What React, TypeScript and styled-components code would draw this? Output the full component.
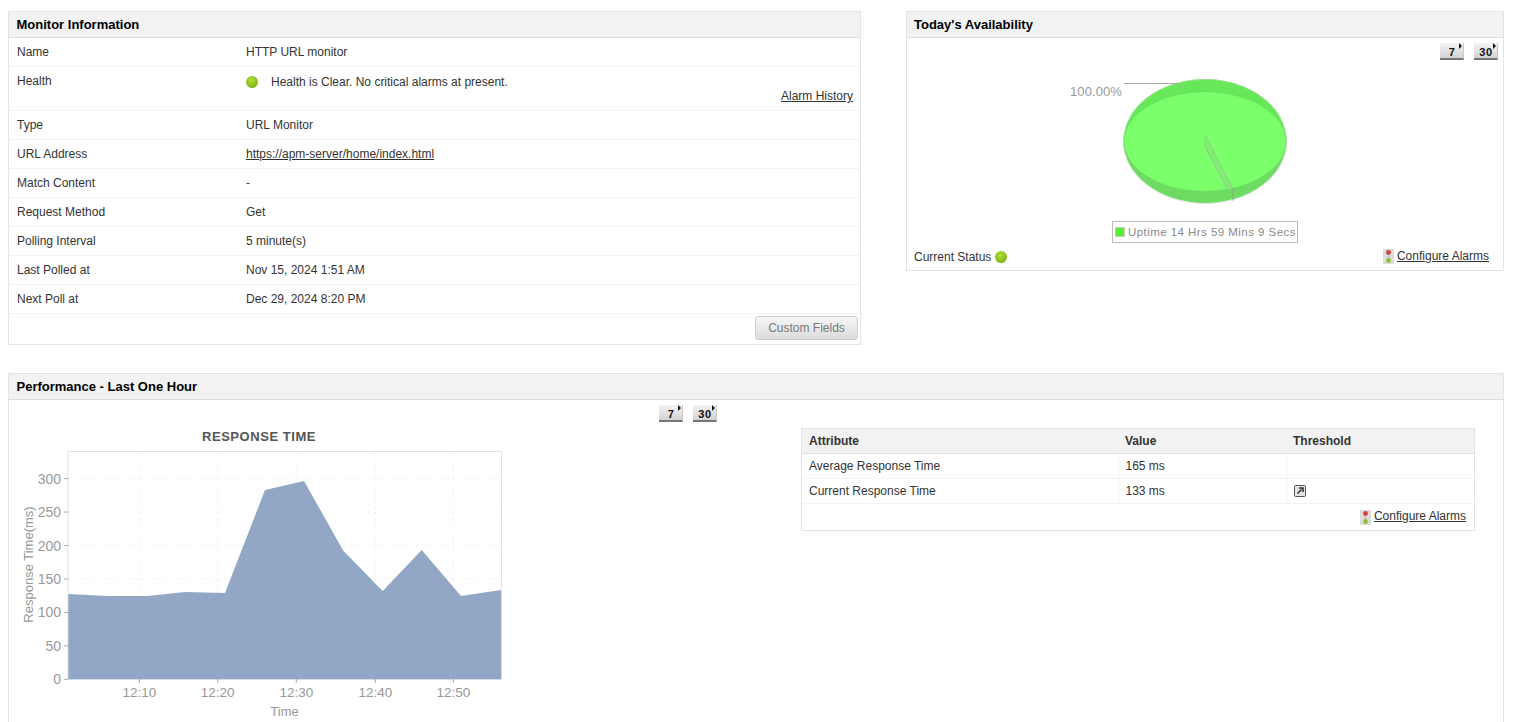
import React from "react";
import styled, { createGlobalStyle } from "styled-components";

const GlobalStyle = createGlobalStyle`
  html, body {
    margin: 0;
    padding: 0;
    background: #fff;
    overflow: hidden;
    height: 722px;
  }
  body {
    font-family: "Liberation Sans", Arial, sans-serif;
    font-size: 12px;
    color: #333;
  }
`;

const Page = styled.div`
  width: 1514px;
  height: 722px;
  overflow: hidden;
  padding: 11px 10px 0 8px;
  box-sizing: border-box;
`;

const TopRow = styled.div`
  display: flex;
  align-items: flex-start;
  justify-content: space-between;
`;

const Panel = styled.section<{ $width?: number }>`
  width: ${(p) => (p.$width ? `${p.$width}px` : "100%")};
  box-sizing: border-box;
  border: 1px solid #e3e3e3;
  background: #fff;
`;

const PerfPanel = styled(Panel)`
  margin-top: 28px;
  height: 420px;
`;

const PanelHeader = styled.h2<{ $inset?: number }>`
  margin: 0;
  height: 25px;
  line-height: 25px;
  padding-left: ${(p) => p.$inset ?? 7.5}px;
  background: #f2f2f2;
  border-bottom: 1px solid #dedede;
  font-size: 13px;
  font-weight: bold;
  color: #000;
`;

const InfoRow = styled.div<{ $tall?: boolean }>`
  display: grid;
  grid-template-columns: 229px 1fr;
  align-items: start;
  height: ${(p) => (p.$tall ? 36 : 21)}px;
  padding: 7px 0 0 8px;
  border-bottom: 1px solid #f3f3f3;
  line-height: 14px;
`;

const HealthValue = styled.div`
  display: flex;
  align-items: center;
  gap: 13px;
  line-height: 16px;
`;

const AlarmHistoryRow = styled.div`
  display: flex;
  justify-content: flex-end;
  height: 0;
  padding-right: 7px;
  transform: translateY(-22px);
`;

const TextLink = styled.a`
  color: #333;
  text-decoration: underline;
  cursor: pointer;
`;

const PanelActions = styled.div`
  display: flex;
  justify-content: flex-end;
  padding: 2px 2px 4px 0;
`;

const GreyButton = styled.button`
  width: 103px;
  height: 24px;
  padding: 0;
  font: 12px "Liberation Sans", Arial, sans-serif;
  color: #7a7a7a;
  background: linear-gradient(#f6f6f6, #dcdcdc);
  border: 1px solid #cfcfcf;
  border-radius: 3px;
`;

const RangeRow = styled.div<{ $indent?: number }>`
  display: flex;
  gap: 10px;
  justify-content: ${(p) => (p.$indent ? "flex-start" : "flex-end")};
  padding: ${(p) => (p.$indent ? `5px 0 0 ${p.$indent}px` : "5px 5px 0 0")};
  height: 17px;
`;

const RangeButton = styled.button`
  position: relative;
  width: 24px;
  height: 17px;
  padding: 2px 0 0 1px;
  font: bold 11px "Liberation Sans", Arial, sans-serif;
  letter-spacing: 0.6px;
  line-height: 12px;
  text-align: center;
  color: #111;
  background: linear-gradient(#f4f4f4, #d2d2d2);
  border: 0;
  border-bottom: 2px solid #777;
  border-right: 1px solid #c8c8c8;
  box-sizing: border-box;

  &::after {
    content: "";
    position: absolute;
    top: 0;
    right: 1px;
    border-left: 3px solid #111;
    border-top: 3px solid transparent;
    border-bottom: 3px solid transparent;
  }
`;

const PieChart = styled.svg`
  display: block;
  width: 596px;
  height: 159px;
`;

const LegendWrap = styled.div`
  display: flex;
  justify-content: center;
  margin-top: 2px;
`;

const Legend = styled.div`
  display: flex;
  align-items: center;
  gap: 3px;
  height: 20px;
  width: 182px;
  padding-left: 2px;
  border: 1px solid #bdbdbd;
  color: #8a8a8a;
  font-size: 11.5px;
  line-height: 22px;
  letter-spacing: 0.45px;
  white-space: nowrap;
`;

const Swatch = styled.span`
  width: 10px;
  height: 10px;
  background: #55ee33;
  border: 1px solid #d0d0d0;
  box-sizing: border-box;
  flex: none;
`;

const StatusRow = styled.div`
  display: flex;
  align-items: center;
  justify-content: space-between;
  height: 27px;
  padding: 0 14px 0 7px;
`;

const Status = styled.div`
  display: flex;
  align-items: center;
  gap: 4px;
`;

const AlarmLink = styled.div`
  display: flex;
  align-items: center;
  gap: 3px;

  ${TextLink} {
    margin-top: -2px;
  }
`;

const PerfBody = styled.div`
  display: flex;
  align-items: flex-start;
`;

const ChartSvg = styled.svg`
  display: block;
  flex: none;
  width: 520px;
  height: 294px;
  margin-top: 6px;
`;

const AttrTableWrap = styled.div`
  margin: 6px 0 0 272px;
  width: 674px;
  box-sizing: border-box;
  border: 1px solid #e3e3e3;
`;

const AttrTable = styled.table`
  width: 100%;
  border-collapse: collapse;
  table-layout: fixed;
`;

const AttrHead = styled.th`
  height: 24px;
  padding: 0 0 0 7px;
  text-align: left;
  font-size: 12px;
  font-weight: bold;
  color: #333;
  background: #f2f2f2;
  border-bottom: 1px solid #e3e3e3;
`;

const AttrCell = styled.td`
  height: 24px;
  padding: 0 0 0 7px;
  border-bottom: 1px solid #f3f3f3;
  border-right: 1px solid #f3f3f3;

  &:last-child {
    border-right: 0;
  }
`;

const AttrFooter = styled.div`
  display: flex;
  justify-content: flex-end;
  align-items: center;
  height: 26px;
  padding-right: 8px;
`;

const StatusDot = () => (
  <svg width="12" height="12" viewBox="0 0 12 12" style={{ flex: "none" }}>
    <defs>
      <radialGradient id="dotGrad" cx="45%" cy="35%" r="65%">
        <stop offset="0%" stopColor="#b4dc3c" />
        <stop offset="70%" stopColor="#8fc31a" />
        <stop offset="100%" stopColor="#7aa912" />
      </radialGradient>
    </defs>
    <circle cx="6" cy="6" r="6" fill="url(#dotGrad)" />
  </svg>
);

const TrafficIcon = () => (
  <svg width="11" height="15" viewBox="0 0 11 15" style={{ flex: "none" }}>
    <rect width="11" height="15" fill="#dcdcdc" />
    <circle cx="5.5" cy="3.5" r="2.4" fill="#d8402e" />
    <circle cx="5.5" cy="7.5" r="1" fill="#b9b9b9" />
    <circle cx="5.5" cy="11.5" r="2.4" fill="#8cbf2a" />
  </svg>
);

const ThresholdIcon = () => (
  <svg width="12" height="12" viewBox="0 0 12 12" style={{ display: "block" }}>
    <rect x="0.5" y="0.5" width="11" height="11" rx="1" fill="#e4e4e4" stroke="#555" />
    <path d="M3.5 8.5 L7.5 4.5 M5 3 H9 V7" fill="none" stroke="#333" strokeWidth="1.6" />
  </svg>
);

const ConfigureAlarms = () => (
  <AlarmLink>
    <TrafficIcon />
    <TextLink>Configure Alarms</TextLink>
  </AlarmLink>
);

const RangeButtons = ({ indent }: { indent?: number }) => (
  <RangeRow $indent={indent}>
    <RangeButton>7</RangeButton>
    <RangeButton>30</RangeButton>
  </RangeRow>
);

const monitorRows = [
  { label: "Type", value: "URL Monitor" },
  { label: "URL Address", value: "https://apm-server/home/index.html", link: true },
  { label: "Match Content", value: "-" },
  { label: "Request Method", value: "Get" },
  { label: "Polling Interval", value: "5 minute(s)" },
  { label: "Last Polled at", value: "Nov 15, 2024 1:51 AM" },
  { label: "Next Poll at", value: "Dec 29, 2024 8:20 PM" },
];

// the pie uses page coordinates through its viewBox
const Pie = () => (
  <PieChart viewBox="907 60 596 159">
    <path d="M1123.5 141 A81.5 62 0 0 1 1286.5 141 Z" fill="#66e858" />
    <path d="M1123.5 141 A81.5 62 0 0 0 1286.5 141 Z" fill="#6edc62" />
    <ellipse cx="1205" cy="141.5" rx="81.5" ry="62" fill="none" stroke="#c4d4c0" strokeWidth="0.6" />
    <ellipse cx="1205" cy="141.5" rx="81" ry="49.8" fill="#7bff6b" stroke="#6ad85f" strokeWidth="0.6" />
    <path d="M1205 135 L1232.7 188.5 L1228 190 L1205 147 Z" fill="#84ea78" stroke="#86b880" strokeWidth="0.5" />
    <path d="M1232.7 188.5 V200.5" stroke="#80a87a" strokeWidth="0.8" />
    <path d="M1124 83.5 H1178 L1181 89" fill="none" stroke="#aaa" />
    <text x="1070" y="96" fontFamily="Liberation Sans" fontSize="13" letterSpacing="0.1" fill="#999">
      100.00%
    </text>
  </PieChart>
);

const plotPoints = [
  [68.3, 594], [108.3, 596], [147.7, 596], [185, 592], [225, 593], [265, 490],
  [304, 481], [343.3, 550.7], [382.7, 591], [421.7, 550], [461, 596], [501, 590],
];
const yTicks = [0, 50, 100, 150, 200, 250, 300];
const xTicks = [
  { x: 139.3, label: "12:10" },
  { x: 217.7, label: "12:20" },
  { x: 296.3, label: "12:30" },
  { x: 375.3, label: "12:40" },
  { x: 453.3, label: "12:50" },
];
const yPos = (v: number) => 679.3 - (v / 100) * 66.9;

const ResponseChart = () => (
  <ChartSvg viewBox="9 428 520 294">
    <text x="259" y="441" textAnchor="middle" fontFamily="Liberation Sans" fontWeight="bold" fontSize="13" letterSpacing="0.55" fill="#555">
      RESPONSE TIME
    </text>
    <rect x="68" y="451.5" width="433.5" height="228" fill="#fff" stroke="#dfe1e5" />
    <polygon
      points={`68.3,679 ${plotPoints.map((p) => p.join(",")).join(" ")} 501,679`}
      fill="#92a7c5"
    />
    {yTicks.slice(1).map((v) => (
      <line key={v} x1="68" x2="501" y1={yPos(v)} y2={yPos(v)} stroke="#7f8c9f" strokeOpacity="0.1" strokeDasharray="3 3" />
    ))}
    {xTicks.map((t) => (
      <line key={t.x} x1={t.x} x2={t.x} y1="452" y2="679" stroke="#7f8c9f" strokeOpacity="0.1" strokeDasharray="3 3" />
    ))}
    <path d="M68 679.5 H501.5" stroke="#d5dbe5" />
    {yTicks.map((v) => (
      <g key={v}>
        <line x1="64" x2="68" y1={yPos(v)} y2={yPos(v)} stroke="#aaa" />
        <text x="61" y={yPos(v) + 5} textAnchor="end" fontFamily="Liberation Sans" fontSize="14" fill="#999">
          {v}
        </text>
      </g>
    ))}
    {xTicks.map((t) => (
      <g key={t.label}>
        <line x1={t.x} x2={t.x} y1="679" y2="683" stroke="#aaa" />
        <text x={t.x} y="697" textAnchor="middle" fontFamily="Liberation Sans" fontSize="13.5" fill="#999">
          {t.label}
        </text>
      </g>
    ))}
    <text x="284.5" y="716" textAnchor="middle" fontFamily="Liberation Sans" fontSize="13" fill="#999">
      Time
    </text>
    <text
      transform="translate(33 564.5) rotate(-90)"
      textAnchor="middle"
      fontFamily="Liberation Sans"
      fontSize="13"
      fill="#999"
    >
      Response Time(ms)
    </text>
  </ChartSvg>
);

export default function App() {
  return (
    <Page>
      <GlobalStyle />
      <TopRow>
        <Panel $width={853}>
          <PanelHeader>Monitor Information</PanelHeader>
          <InfoRow>
            <span>Name</span>
            <span>HTTP URL monitor</span>
          </InfoRow>
          <InfoRow $tall>
            <span>Health</span>
            <HealthValue>
              <StatusDot />
              <span>Health is Clear. No critical alarms at present.</span>
            </HealthValue>
          </InfoRow>
          <AlarmHistoryRow>
            <TextLink>Alarm History</TextLink>
          </AlarmHistoryRow>
          {monitorRows.map((row) => (
            <InfoRow key={row.label}>
              <span>{row.label}</span>
              {row.link ? <TextLink>{row.value}</TextLink> : <span>{row.value}</span>}
            </InfoRow>
          ))}
          <PanelActions>
            <GreyButton>Custom Fields</GreyButton>
          </PanelActions>
        </Panel>

        <Panel $width={598}>
          <PanelHeader $inset={7}>Today's Availability</PanelHeader>
          <RangeButtons />
          <Pie />
          <LegendWrap>
            <Legend>
              <Swatch />
              Uptime 14 Hrs 59 Mins 9 Secs
            </Legend>
          </LegendWrap>
          <StatusRow>
            <Status>
              Current Status <StatusDot />
            </Status>
            <ConfigureAlarms />
          </StatusRow>
        </Panel>
      </TopRow>

      <PerfPanel>
        <PanelHeader>Performance - Last One Hour</PanelHeader>
        <RangeButtons indent={650} />
        <PerfBody>
          <ResponseChart />
          <AttrTableWrap>
            <AttrTable>
              <colgroup>
                <col style={{ width: 316 }} />
                <col style={{ width: 168 }} />
                <col />
              </colgroup>
              <thead>
                <tr>
                  <AttrHead>Attribute</AttrHead>
                  <AttrHead>Value</AttrHead>
                  <AttrHead>Threshold</AttrHead>
                </tr>
              </thead>
              <tbody>
                <tr>
                  <AttrCell>Average Response Time</AttrCell>
                  <AttrCell>165 ms</AttrCell>
                  <AttrCell />
                </tr>
                <tr>
                  <AttrCell>Current Response Time</AttrCell>
                  <AttrCell>133 ms</AttrCell>
                  <AttrCell>
                    <ThresholdIcon />
                  </AttrCell>
                </tr>
              </tbody>
            </AttrTable>
            <AttrFooter>
              <ConfigureAlarms />
            </AttrFooter>
          </AttrTableWrap>
        </PerfBody>
      </PerfPanel>
    </Page>
  );
}
